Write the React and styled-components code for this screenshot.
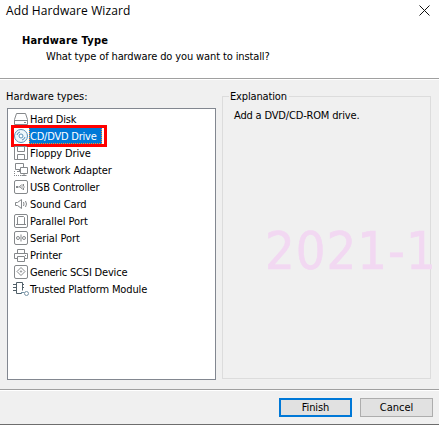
import React from "react";
import styled, { createGlobalStyle } from "styled-components";

const GlobalStyle = createGlobalStyle`
  * { box-sizing: border-box; }
  body { margin: 0; overflow: hidden; background: #f0f0f0; }
`;

const Window = styled.main`
  position: relative;
  display: flex;
  flex-direction: column;
  width: 439px;
  height: 425px;
  overflow: hidden;
  background: #f0f0f0;
  border-bottom: 1px solid #6d6d6d;
  color: #000;
  font: condensed 11px/17px "DejaVu Sans Condensed", "DejaVu Sans", sans-serif;
  white-space: nowrap;
`;

const Label = styled.span`
  letter-spacing: ${(p) => p.$track || 0}px;
`;

const Header = styled.header`
  height: 80px;
  flex: none;
  background: #fff;
  border-bottom: 1px solid #fff;
  box-shadow: inset 0 -1px #a0a0a0;
`;

const TitleBar = styled.div`
  display: flex;
  justify-content: space-between;
  height: 33px;
  padding: 2px 9px 0 6px;
  font: 12px/17px "Open Sans", sans-serif;
  svg { margin-top: 3px; }
`;

const Heading = styled.h1`
  margin: 0 0 0 22px;
  font-size: 11px;
  line-height: 16px;
  font-weight: 700;
`;

const Subtitle = styled.p`
  margin: 0 0 0 46px;
  line-height: 16px;
`;

const Body = styled.section`
  display: flex;
  height: 309px;
  flex: none;
  padding: 8px 8px 0 7px;
`;

const ListColumn = styled.div`
  width: 209px;
  margin-right: 6px;
`;

const ListCaption = styled.div`
  height: 20px;
  line-height: 17px;
  margin-left: -1px;
`;

const ListBox = styled.ul`
  height: 272px;
  margin: 0;
  padding: 1px 5px;
  list-style: none;
  background: #fff;
  border: 1px solid #828790;
`;

const Item = styled.li`
  position: relative;
  display: flex;
  align-items: center;
  height: 17px;
`;

const ItemLabel = styled(Label)`
  height: 17px;
  padding: 0 1px;
  line-height: 19px;
  min-width: ${(p) => (p.$selected ? "73px" : "0")};
  background: ${(p) => (p.$selected ? "#0078d7" : "transparent")};
  color: ${(p) => (p.$selected ? "#fff" : "#000")};
  outline: ${(p) => (p.$selected ? "1px dotted #ff8728" : "none")};
  outline-offset: -1px;
`;

const Marker = styled.span`
  position: absolute;
  left: -2px;
  top: -2px;
  width: 96px;
  height: 22px;
  border: 3px solid #f00;
`;

const Group = styled.fieldset`
  flex: 1;
  height: 283px;
  min-width: 0;
  margin: 8px 0 0;
  padding: 0 0 0 11px;
  border: 1px solid #dcdcdc;
`;

const Legend = styled.legend`
  height: 16px;
  margin: -9px 0 0 -5px;
  padding: 0 2px 0 1px;
  line-height: 17px;
  float: left;
  background: #f0f0f0;
`;

const Explanation = styled.p`
  clear: both;
  margin: 0;
  padding-top: 3px;
`;

const Watermark = styled.div`
  position: absolute;
  left: 265px;
  top: 219px;
  font: condensed 52px/64px "DejaVu Sans Condensed", "DejaVu Sans", sans-serif;
  letter-spacing: 1px;
  color: #f2d8f2;
  -webkit-text-stroke: 0.6px #f2d8f2;
`;

const Footer = styled.footer`
  display: flex;
  justify-content: flex-end;
  gap: 8px;
  flex: 1;
  padding: 7px 6px 0 0;
  border-top: 1px solid #a0a0a0;
  box-shadow: inset 0 1px #fff;
`;

const Button = styled.button`
  width: 73px;
  height: 19px;
  margin-top: 1px;
  padding: 0;
  border: ${(p) => (p.$primary ? "2px solid #0078d7" : "1px solid #adadad")};
  background: #e1e1e1;
  color: #000;
  font: inherit;
  line-height: 15px;
`;

const Glyph = styled.svg`
  flex: none;
  width: 16px;
  height: 16px;
  fill: none;
  stroke: #85888b;
  stroke-width: 1;
`;

const frame = <rect x="1.5" y="1.5" width="13" height="13" rx="1.5" />;

const icons = {
  disk: <path d="M3.500 2.500h9l2 6v5h-13v-5zM1.500 9.500h13M11 11.500h2" />,
  cd: (
    <g stroke="#5b91b8">
      <circle cx="8" cy="8" r="6.500" fill="#eef7fc" />
      <circle cx="8" cy="8" r="2" fill="#fff" />
      <path d="M4 7a4 4 0 0 1 3-3M12 9a4 4 0 0 1-3 3" />
    </g>
  ),
  floppy: <path d="M1.500 1.500h12l1 1v12h-13zM4.500 1.500v5h7v-5M4.500 14.500v-5h7v5" />,
  network: (
    <g>
      <path d="M2.500 1.500h8v6h-8zM4 9.500h4M6.500 7.500v2" />
      <path d="M7.500 5.500h7v6h-7z" fill="#fff" />
      <path d="M11 11.500v2M8.500 13.500h5" />
      <path d="M1 13.500h7M1.500 9v5" strokeDasharray="1 1" />
    </g>
  ),
  usb: (
    <g>
      {frame}
      <path d="M4 8h8M6 8l2-2h2M7 8l2 2h1" strokeWidth=".8" />
      <path d="M3 7h2v2H3zM10 5h1v2h-1zM10 9h1v2h-1z" fill="#85888b" stroke="none" />
    </g>
  ),
  sound: <path d="M2.500 6.500h2l4-3v9l-4-3h-2zM10.500 6q1 2 0 4M12.500 5q2 3 0 6" />,
  parallel: (
    <g>
      {frame}
      <path d="M4.500 11V4.500l1-1h5l1 1V11M3 11.500h10" />
    </g>
  ),
  serial: (
    <g>
      {frame}
      <circle cx="5" cy="8" r="1.500" />
      <circle cx="11" cy="8" r="1.500" />
      <path d="M8 4.500v7" />
    </g>
  ),
  printer: <path d="M4.500 6V2.500h7V6M4.500 11.500h-3v-5h13v5h-3M4.500 9.500h7v5h-7zM12 8.500h1" />,
  scsi: (
    <g>
      {frame}
      <path d="M8 3.500l4 4-4 4-4-4z" />
      <circle cx="8" cy="7.500" r=".7" />
    </g>
  ),
  tpm: (
    <g stroke="#526069">
      <path d="M3.500 1.500h6v8M3.500 1.500v11h5M0 3.500h3M0 6.500h3M0 9.500h3M10 3.500h1M10 6.500h1" />
      <circle cx="13.500" cy="12.500" r="2" stroke="#7894a6" />
      <path d="M8 11.500h3.500M8.500 11v2" stroke="#7894a6" />
    </g>
  ),
};

const devices = [
  ["disk", "Hard Disk", -0.2],
  ["cd", "CD/DVD Drive", -0.22],
  ["floppy", "Floppy Drive", -0.15],
  ["network", "Network Adapter", -0.13],
  ["usb", "USB Controller", -0.2],
  ["sound", "Sound Card", -0.1],
  ["parallel", "Parallel Port", -0.08],
  ["serial", "Serial Port", -0.08],
  ["printer", "Printer", -0.12],
  ["scsi", "Generic SCSI Device", -0.19],
  ["tpm", "Trusted Platform Module", -0.13],
];

export default function App() {
  return (
    <>
      <GlobalStyle />
      <Window>
        <Header>
          <TitleBar>
            <Label $track={0.1}>Add Hardware Wizard</Label>
            <svg width="11" height="11" viewBox="0 0 11 11" fill="none" stroke="#111">
              <path d="M.5.5l10 10M10.500.5l-10 10" />
            </svg>
          </TitleBar>
          <Heading><Label $track={0.2}>Hardware Type</Label></Heading>
          <Subtitle><Label $track={-0.12}>What type of hardware do you want to install?</Label></Subtitle>
        </Header>
        <Body>
          <ListColumn>
            <ListCaption><Label>Hardware types:</Label></ListCaption>
            <ListBox>
              {devices.map(([icon, name, track]) => (
                <Item key={icon}>
                  <Glyph viewBox="0 0 16 16">{icons[icon]}</Glyph>
                  <ItemLabel $track={track} $selected={icon === "cd"}>{name}</ItemLabel>
                  {icon === "cd" && <Marker />}
                </Item>
              ))}
            </ListBox>
          </ListColumn>
          <Group>
            <Legend><Label $track={-0.15}>Explanation</Label></Legend>
            <Explanation><Label $track={-0.17}>Add a DVD/CD-ROM drive.</Label></Explanation>
          </Group>
        </Body>
        <Watermark>2021-1</Watermark>
        <Footer>
          <Button $primary><Label $track={-0.1}>Finish</Label></Button>
          <Button>Cancel</Button>
        </Footer>
      </Window>
    </>
  );
}
